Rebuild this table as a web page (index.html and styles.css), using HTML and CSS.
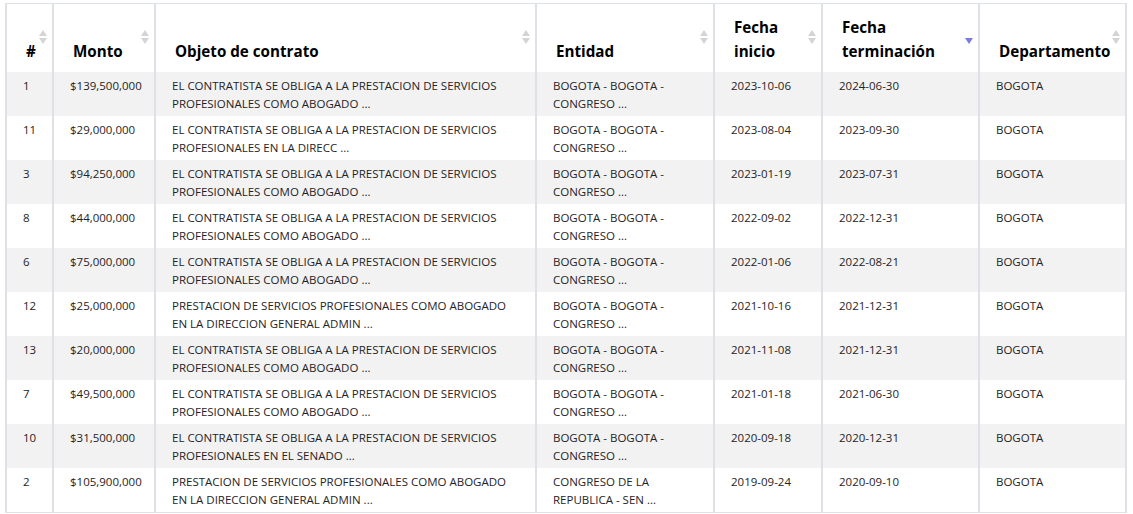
FILE: index.html
```html
<!DOCTYPE html>
<html lang="es">
<head>
<meta charset="utf-8">
<title>Contratos</title>
<link rel="stylesheet" href="styles.css">
</head>
<body>
<div class="wrap">
<table class="grid">
<thead>
<tr>
<th class="c-id">#<svg class="sort" viewBox="0 0 8 14"><polygon points="0,6 4,0 8,6"/><polygon points="0,8 8,8 4,14"/></svg></th>
<th class="c-monto">Monto<svg class="sort" viewBox="0 0 8 14"><polygon points="0,6 4,0 8,6"/><polygon points="0,8 8,8 4,14"/></svg></th>
<th class="c-obj">Objeto de contrato<svg class="sort" viewBox="0 0 8 14"><polygon points="0,6 4,0 8,6"/><polygon points="0,8 8,8 4,14"/></svg></th>
<th class="c-ent">Entidad<svg class="sort" viewBox="0 0 8 14"><polygon points="0,6 4,0 8,6"/><polygon points="0,8 8,8 4,14"/></svg></th>
<th class="c-ini">Fecha inicio<svg class="sort" viewBox="0 0 8 14"><polygon points="0,6 4,0 8,6"/><polygon points="0,8 8,8 4,14"/></svg></th>
<th class="c-fin">Fecha terminación<svg class="sort active" viewBox="0 0 8 14"><polygon points="0,8 8,8 4,14"/></svg></th>
<th class="c-dep">Departamento<svg class="sort" viewBox="0 0 8 14"><polygon points="0,6 4,0 8,6"/><polygon points="0,8 8,8 4,14"/></svg></th>
</tr>
</thead>
<tbody>
<tr><td>1</td><td>$139,500,000</td><td>EL CONTRATISTA SE OBLIGA A LA PRESTACION DE SERVICIOS PROFESIONALES COMO ABOGADO ...</td><td>BOGOTA - BOGOTA - CONGRESO ...</td><td>2023-10-06</td><td>2024-06-30</td><td>BOGOTA</td></tr>
<tr><td>11</td><td>$29,000,000</td><td>EL CONTRATISTA SE OBLIGA A LA PRESTACION DE SERVICIOS PROFESIONALES EN LA DIRECC ...</td><td>BOGOTA - BOGOTA - CONGRESO ...</td><td>2023-08-04</td><td>2023-09-30</td><td>BOGOTA</td></tr>
<tr><td>3</td><td>$94,250,000</td><td>EL CONTRATISTA SE OBLIGA A LA PRESTACION DE SERVICIOS PROFESIONALES COMO ABOGADO ...</td><td>BOGOTA - BOGOTA - CONGRESO ...</td><td>2023-01-19</td><td>2023-07-31</td><td>BOGOTA</td></tr>
<tr><td>8</td><td>$44,000,000</td><td>EL CONTRATISTA SE OBLIGA A LA PRESTACION DE SERVICIOS PROFESIONALES COMO ABOGADO ...</td><td>BOGOTA - BOGOTA - CONGRESO ...</td><td>2022-09-02</td><td>2022-12-31</td><td>BOGOTA</td></tr>
<tr><td>6</td><td>$75,000,000</td><td>EL CONTRATISTA SE OBLIGA A LA PRESTACION DE SERVICIOS PROFESIONALES COMO ABOGADO ...</td><td>BOGOTA - BOGOTA - CONGRESO ...</td><td>2022-01-06</td><td>2022-08-21</td><td>BOGOTA</td></tr>
<tr><td>12</td><td>$25,000,000</td><td>PRESTACION DE SERVICIOS PROFESIONALES COMO ABOGADO EN LA DIRECCION GENERAL ADMIN ...</td><td>BOGOTA - BOGOTA - CONGRESO ...</td><td>2021-10-16</td><td>2021-12-31</td><td>BOGOTA</td></tr>
<tr><td>13</td><td>$20,000,000</td><td>EL CONTRATISTA SE OBLIGA A LA PRESTACION DE SERVICIOS PROFESIONALES COMO ABOGADO ...</td><td>BOGOTA - BOGOTA - CONGRESO ...</td><td>2021-11-08</td><td>2021-12-31</td><td>BOGOTA</td></tr>
<tr><td>7</td><td>$49,500,000</td><td>EL CONTRATISTA SE OBLIGA A LA PRESTACION DE SERVICIOS PROFESIONALES COMO ABOGADO ...</td><td>BOGOTA - BOGOTA - CONGRESO ...</td><td>2021-01-18</td><td>2021-06-30</td><td>BOGOTA</td></tr>
<tr><td>10</td><td>$31,500,000</td><td>EL CONTRATISTA SE OBLIGA A LA PRESTACION DE SERVICIOS PROFESIONALES EN EL SENADO ...</td><td>BOGOTA - BOGOTA - CONGRESO ...</td><td>2020-09-18</td><td>2020-12-31</td><td>BOGOTA</td></tr>
<tr><td>2</td><td>$105,900,000</td><td>PRESTACION DE SERVICIOS PROFESIONALES COMO ABOGADO EN LA DIRECCION GENERAL ADMIN ...</td><td>CONGRESO DE LA REPUBLICA - SEN ...</td><td>2019-09-24</td><td>2020-09-10</td><td>BOGOTA</td></tr>
</tbody>
</table>
</div>
</body>
</html>
```

FILE: styles.css
```css
* { box-sizing: border-box; }

body {
  margin: 0;
  background: #ffffff;
  font-family: "Open Sans", "Noto Sans", "Liberation Sans", sans-serif;
  color: #212529;
}

.wrap {
  padding: 3px 0 0 5px;
}

.grid {
  table-layout: fixed;
  width: 1122px;
  border-collapse: separate;
  border-spacing: 0;
  border: 1px solid #dee2e6;
}

.grid th,
.grid td {
  border-left: 1px solid #dee2e6;
  border-right: 1px solid #dee2e6;
}

.grid th {
  position: relative;
  height: 68px;
  padding: 11px 14px 9px 19px;
  vertical-align: bottom;
  text-align: left;
  font-size: 15.2px;
  font-weight: 700;
  line-height: 24px;
  color: #000000;
}

.grid td {
  height: 44px;
  padding: 5px 16px 3px;
  vertical-align: top;
  font-size: 11.5px;
  line-height: 18px;
  color: #1f2326;
}

.grid tbody tr:nth-child(odd) td {
  background: #f2f2f2;
}

.c-id { width: 47px; }
.c-monto { width: 102px; }
.c-obj { width: 381px; }
.c-ent { width: 178px; }
.c-ini { width: 108px; }
.c-fin { width: 157px; }
.c-dep { width: 147px; }

.sort {
  position: absolute;
  right: 5px;
  top: 50%;
  width: 8px;
  height: 14px;
  margin-top: -8px;
  fill: #d4d4d4;
}

.sort.active {
  fill: #7a7ae0;
}
```
